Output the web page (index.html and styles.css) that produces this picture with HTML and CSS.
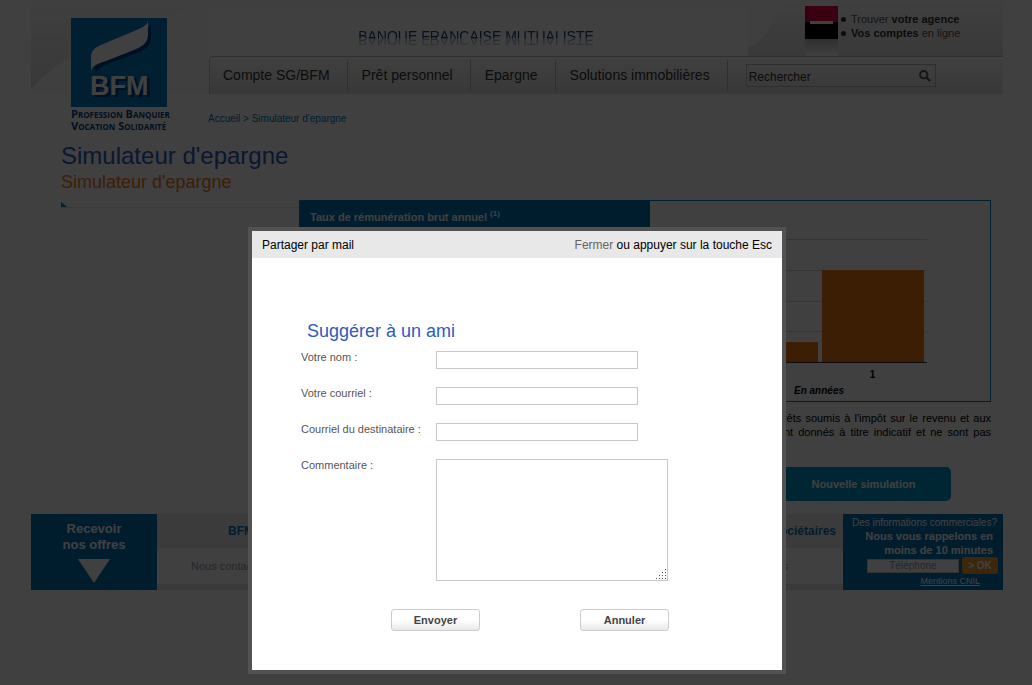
FILE: index.html
```html
<!DOCTYPE html>
<html lang="fr">
<head>
<meta charset="utf-8">
<title>Simulateur d'epargne</title>
<link rel="stylesheet" href="styles.css">
</head>
<body>
<div class="page">
  <header class="header">
    <svg class="header-bg" viewBox="0 0 972 95" preserveAspectRatio="none" aria-hidden="true">
      <defs>
        <linearGradient id="shade" x1="0" y1="0" x2="0" y2="1"><stop offset="0" stop-color="#fafafa"/><stop offset="1" stop-color="#e2e2e2"/></linearGradient>
      </defs>
      <rect width="972" height="93" fill="#fbfbfb"/>
      <path d="M0 9V89Q18 69 40 57C80 34 110 18 200 0H0Z" fill="url(#shade)"/>
      <path d="M717 56V47C732 42 746 22 747 0H972V56Z" fill="url(#shade)"/>
    </svg>
    <a class="logo" href="#">
      <svg class="logo-mark" viewBox="0 0 96 89" role="img" aria-label="BFM">
        <rect width="96" height="89" fill="#007bc0"/>
        <path d="M24 56V41C25 34 29 32 36 30C62 19 76 17 80 6V21C79 29 73 32 66 35C44 44 29 46 24 56Z" fill="#003f85"/>
        <path d="M20 53V38C21 31 25 29 32 26L61 14C70 10 76 8 77 3V18C76 26 70 29 63 32L35 43C26 46 22 47 20 53Z" fill="#fff"/>
        <text class="logo-letters" x="19" y="77">BFM</text>
      </svg>
      <span class="motto">Profession Banquier</span>
      <span class="motto">Vocation Solidarité</span>
    </a>
    <div class="header-main">
      <div class="header-top">
        <div class="brand"><span class="brand-name">BANQUE FRANCAISE MUTUALISTE</span></div>
        <div class="access">
          <svg class="sg" viewBox="0 0 33 50" aria-hidden="true">
            <defs><linearGradient id="fade" x1="0" y1="0" x2="0" y2="1"><stop offset="0" stop-color="#bbb"/><stop offset="1" stop-color="#fff"/></linearGradient></defs>
            <rect width="33" height="17" fill="#e2003c"/><rect y="16" width="33" height="17" fill="#000"/>
            <rect x="5" y="15" width="23" height="3" fill="#fff"/><rect y="33" width="33" height="17" fill="url(#fade)"/>
          </svg>
          <ul class="access-links">
            <li><a href="#">Trouver <b>votre agence</b></a></li>
            <li><a href="#"><b>Vos comptes</b> en ligne</a></li>
          </ul>
        </div>
      </div>
      <nav class="nav">
        <a href="#">Compte SG/BFM</a>
        <a href="#">Prêt personnel</a>
        <a href="#">Epargne</a>
        <a href="#">Solutions immobilières</a>
        <form class="search">
          <input class="search-input" type="text" value="Rechercher" aria-label="Rechercher">
          <button class="search-button" type="button" aria-label="Lancer la recherche">
            <svg viewBox="0 0 12 12" width="12" height="12"><circle cx="4.7" cy="4.7" r="3.6" fill="none" stroke="#555" stroke-width="2"/><path d="M7.5 7.5L11 11" stroke="#555" stroke-width="2.4"/></svg>
          </button>
        </form>
      </nav>
      <p class="breadcrumb"><a href="#">Accueil</a> &gt; <a href="#">Simulateur d'epargne</a></p>
    </div>
  </header>

  <main class="content">
    <h1 class="title">Simulateur d'epargne</h1>
    <p class="subtitle">Simulateur d'epargne</p>
    <div class="columns">
      <div class="rule"><svg width="7" height="6" viewBox="0 0 7 6" aria-hidden="true"><path d="M0 0L6 5H0Z" fill="#007bc0"/></svg></div>
      <div class="simulator">
        <section class="results">
          <h2 class="rate">Taux de rémunération brut annuel <sup>(1)</sup></h2>
          <figure class="chart">
            <svg class="bars" viewBox="0 0 216 126" aria-hidden="true">
              <path d="M0 1.500H216M0 32.500H216M0 63.500H216M0 93.500H216" stroke="#d4d4d4"/>
              <rect x="5" y="104" width="102" height="20" fill="#ef7914"/>
              <rect x="111" y="32" width="102" height="92" fill="#ef7914"/>
              <path d="M0 124.500H216" stroke="#333"/>
            </svg>
            <span class="tick">1</span>
            <figcaption class="axis">En années</figcaption>
          </figure>
        </section>
        <p class="note">(1) Taux annuel brut en vigueur pour un placement donné d'une durée d'un an. Montant des intérêts soumis à l'impôt sur le revenu et aux prélèvements sociaux. Les résultats chiffrés de cette simulation de placement en ligne vous sont donnés à titre indicatif et ne sont pas contractuels.</p>
        <button class="restart" type="button">Nouvelle simulation</button>
      </div>
    </div>
  </main>

  <footer class="footer">
    <a class="offers" href="#">Recevoir<br>nos offres
      <svg width="32" height="24" viewBox="0 0 32 24" aria-hidden="true"><path d="M0 0H32L16 24Z" fill="#fff"/></svg>
    </a>
    <div class="footer-links">
      <div class="footer-tabs"><a href="#">BFM et vous</a><a href="#">Espace sociétaires</a></div>
      <div class="footer-sub"><a href="#">Nous contacter</a><a href="#">Mentions légales</a></div>
    </div>
    <form class="callback">
      <label for="phone">Des informations commerciales?</label>
      <strong>Nous vous rappelons en<br>moins de 10 minutes</strong>
      <div class="callback-row">
        <input id="phone" class="phone" type="tel" placeholder="Téléphone">
        <button class="ok" type="button">&gt; OK</button>
      </div>
      <a class="cnil" href="#">Mentions CNIL</a>
    </form>
  </footer>
</div>

<div class="overlay">
  <div class="modal" role="dialog" aria-modal="true" aria-labelledby="modal-title">
    <div class="modal-bar">
      <span id="modal-title">Partager par mail</span>
      <span><a class="close" href="#">Fermer</a> ou appuyer sur la touche Esc</span>
    </div>
    <form class="share">
      <h2 class="share-title">Suggérer à un ami</h2>
      <div class="fields">
        <label for="nom">Votre nom :</label><input id="nom" class="field" type="text">
        <label for="mail">Votre courriel :</label><input id="mail" class="field" type="email">
        <label for="dest">Courriel du destinataire :</label><input id="dest" class="field" type="email">
        <label for="comment">Commentaire :</label>
        <div class="area">
          <textarea id="comment" class="comment"></textarea>
          <svg class="grip" width="10" height="10" viewBox="0 0 10 10" aria-hidden="true"><path d="M9 0.500h1M6 3.500h1M9 3.500h1M3 6.500h1M6 6.500h1M9 6.500h1M0 9.500h1M3 9.500h1M6 9.500h1M9 9.500h1" stroke="#555"/></svg>
        </div>
      </div>
      <div class="actions">
        <button class="button" type="button">Envoyer</button>
        <button class="button" type="button">Annuler</button>
      </div>
    </form>
  </div>
</div>
</body>
</html>
```
FILE: styles.css
```css
* { box-sizing: border-box; }
html, body { height: 100%; }
body { margin: 0; background: #fff; color: #000; font: 11px/14px "Liberation Sans", Arial, sans-serif; overflow: hidden; }
h1, h2, p, ul, figure { margin: 0; padding: 0; }
a { color: inherit; text-decoration: none; }
button, input, textarea { font: inherit; border-radius: 0; }
svg { display: block; }

.page { padding: 0 29px 0 31px; }

.header { position: relative; display: flex; height: 144px; }
.header-bg { position: absolute; inset: 0 0 auto; width: 100%; height: 95px; z-index: -1; }
.logo { width: 177px; padding: 18px 0 0 40px; flex: none; }
.logo-mark { width: 96px; height: 89px; margin-bottom: 1px; }
.logo-letters { font: bold 27px "Liberation Sans", Arial, sans-serif; fill: #fff; text-shadow: 3px 2px 0 #003f85; }
.motto { display: block; font: bold 11px/12px "Open Sans", "Liberation Sans", sans-serif; font-variant: small-caps; color: #003f85; white-space: nowrap; }
.header-main { flex: 1; }
.header-top { display: flex; height: 56px; }
.brand { flex: 1; margin-top: 10px; padding: 19px 4px 0 0; background: #fff; text-align: center; }
.brand-name { display: block; height: 9px; overflow: hidden; font-size: 14px; line-height: 14px; color: #1c3f85; -webkit-box-reflect: below 0 linear-gradient(rgba(0, 0, 0, 0.2), rgba(0, 0, 0, 0.5)); }
.access { display: flex; width: 255px; padding: 6px 0 0 57px; }
.sg { width: 33px; height: 50px; flex: none; }
.access-links { list-style: none; padding: 6px 0 0 3px; color: #555; }
.access-links li { display: flex; align-items: center; gap: 5px; }
.access-links li::before { content: ""; width: 5px; height: 5px; border-radius: 50%; background: #333; }
.access-links b { color: #333; }

.nav { display: flex; align-items: center; height: 38px; margin-left: 1px; border-top: 1px solid #bbb; border-left: 1px solid #ccc; border-radius: 4px 0 4px 0; background: linear-gradient(#fff, #dedede); font-size: 14px; color: #333; }
.nav > a { display: flex; align-items: center; height: 31px; padding: 0 17px 2px 14px; border-right: 1px solid #bbb; white-space: nowrap; }
.nav > a:first-child { padding-left: 13px; }
.search { display: flex; width: 190px; height: 23px; margin-left: 18px; border: 1px solid #bbb; }
.search-input { flex: 1; min-width: 0; padding: 2px 2px 0; border: 0; background: none; color: #333; font-size: 12px; }
.search-button { padding: 0 4px; border: 0; background: none; }
.breadcrumb { margin-top: 18px; font-size: 10px; color: #007bc0; }

.content { padding: 0 12px 0 30px; }
.title { font-size: 24px; line-height: 24px; font-weight: normal; color: #2b5cc0; }
.subtitle { font-size: 18px; line-height: 28px; color: #ef7914; margin-bottom: 4px; }
.columns { display: flex; }
.rule { flex: 1; height: 8px; padding-top: 2px; border-bottom: 1px solid #e4e4e4; }
.simulator { width: 692px; }
.results { display: flex; justify-content: space-between; align-items: flex-start; height: 202px; border: 1px solid #007bc0; }
.rate { width: 350px; padding: 9px 10px; background: #0075b8; color: #fff; font-size: 11px; line-height: 14px; height: 33px; }
.rate sup { font-size: 8px; line-height: 8px; }
.chart { width: 216px; margin-right: 63px; padding-top: 37px; font-size: 10px; font-weight: bold; }
.bars { width: 216px; height: 126px; }
.tick { display: block; margin-top: 4px; padding-left: 107px; text-align: center; }
.axis { margin-top: 2px; padding-left: 83px; font-style: italic; }
.note { margin-top: 9px; text-align: justify; }
.restart { display: block; width: 175px; height: 34px; margin: 14px 40px 13px auto; border: 0; border-radius: 5px; background: #0099cc; color: #fff; font-weight: bold; }

.footer { display: flex; height: 76px; }
.offers { width: 126px; padding-top: 7px; background: #0075b8; color: #fff; font-size: 13px; line-height: 16px; font-weight: bold; text-align: center; }
.offers svg { margin: 6px auto 0; }
.footer-links { flex: 1; border-bottom: 6px solid #e8e8e8; }
.footer-tabs { display: flex; justify-content: space-between; height: 34px; padding: 0 7px 0 71px; align-items: center; background: #ebebeb; color: #0075b8; font-size: 12px; font-weight: bold; }
.footer-sub { display: flex; justify-content: space-between; height: 36px; padding: 0 55px 0 34px; align-items: center; color: #999; }
.callback { display: flex; flex-direction: column; width: 160px; padding: 3px 5px 0 0; background: #0075b8; color: #fff; text-align: right; }
.callback label { padding-right: 1px; font-size: 10px; line-height: 12px; }
.callback strong { padding-right: 5px; }
.callback-row { display: flex; justify-content: flex-end; align-items: center; gap: 3px; }
.phone { width: 92px; height: 14px; padding: 0; border: 1px solid #ccc; background: #fff; font-size: 10px; text-align: center; }
.phone::placeholder { color: #999; }
.ok { width: 36px; height: 17px; padding: 0; border: 0; border-radius: 2px; background: #f29a28; color: #fff; font-size: 10px; font-weight: bold; }
.cnil { padding-right: 18px; font-size: 9px; text-decoration: underline; }

.overlay { position: fixed; inset: 0; display: flex; justify-content: center; align-items: flex-start; padding: 227px 0 0 2px; background: rgba(0, 0, 0, 0.75); }
.modal { width: 538px; border: 4px solid #525252; background: #fff; }
.modal-bar { display: flex; justify-content: space-between; padding: 7px 10px 6px; background: #e8e8e8; font-size: 12px; }
.close { color: #666; }
.share { padding: 62px 49px 39px; color: #555; }
.share-title { margin-left: 6px; font-size: 18px; line-height: 22px; font-weight: normal; color: #2b5cc0; }
.fields { display: grid; grid-template-columns: 135px 1fr; row-gap: 18px; margin-top: 9px; }
.fields label { line-height: 12px; }
.field { width: 202px; height: 18px; padding: 1px 2px; border: 1px solid #c8c8c8; }
.area { position: relative; width: 232px; height: 122px; }
.comment { display: block; width: 100%; height: 100%; border: 1px solid #c8c8c8; resize: none; }
.grip { position: absolute; right: 2px; bottom: 2px; }
.actions { display: flex; gap: 100px; margin-top: 28px; padding-left: 90px; }
.button { width: 89px; height: 22px; padding: 0; border: 1px solid #ccc; border-radius: 3px; background: linear-gradient(#fff 50%, #e8e8e8); color: #444; font-weight: bold; }
```
